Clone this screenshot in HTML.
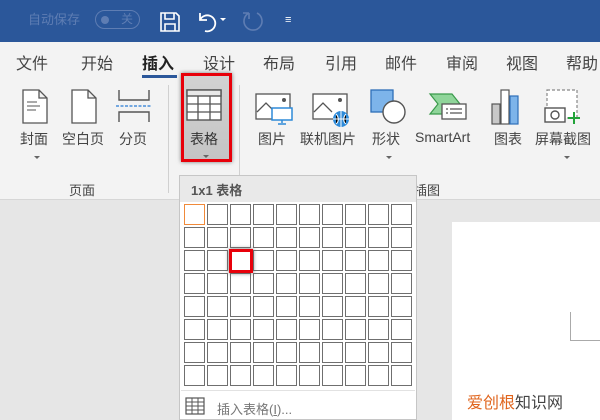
<!DOCTYPE html>
<html><head><meta charset="utf-8"><style>
*{margin:0;padding:0;box-sizing:border-box}
body{width:600px;height:420px;overflow:hidden;position:relative;background:#e6e6e6;font-family:"Liberation Sans","Noto Sans CJK SC",sans-serif;}
.abs{position:absolute}
.title{left:0;top:0;width:600px;height:42px;background:#2b579a}
.tabs{left:0;top:42px;width:600px;height:158px;background:#f3f3f3;border-bottom:1px solid #d6d6d6}
.tab{position:absolute;top:50px;font-size:16px;color:#444;white-space:nowrap}
.lbl{position:absolute;top:129px;font-size:14px;color:#444;white-space:nowrap}
.arr{position:absolute;top:156px;width:0;height:0;border-left:3px solid transparent;border-right:3px solid transparent;border-top:3px solid #666}
.sep{position:absolute;top:85px;width:1px;height:108px;background:#d0d0d0}
.cell{position:absolute;width:21px;height:21px;border:1px solid #6f6f6f;background:#fff}
</style></head><body>
<div class="abs title"></div>
<div class="abs" style="left:28px;top:9px;font-size:13px;color:#5e7db3">自动保存</div>
<div class="abs" style="left:95px;top:10px;width:45px;height:19px;border:1px solid #5e7db3;border-radius:10px"></div>
<div class="abs" style="left:101px;top:16px;width:8px;height:8px;border-radius:4px;background:#5e7db3"></div>
<div class="abs" style="left:121px;top:10px;font-size:12px;color:#5e7db3">关</div>
<svg class="abs" style="left:158px;top:10px" width="24" height="24" viewBox="0 0 24 24"><path d="M3 3h15l3 3v15H3z M7 3v6h9V3 M7 21v-7h10v7" fill="none" stroke="#fff" stroke-width="1.6"/></svg>
<svg class="abs" style="left:196px;top:10px" width="34" height="24" viewBox="0 0 34 24"><path d="M4 3v7h7 M4 10a8 8 0 1 1 5 11" fill="none" stroke="#fff" stroke-width="1.8"/><path d="M24 8l3 3 3-3z" fill="#fff"/></svg>
<svg class="abs" style="left:240px;top:8px" width="26" height="26" viewBox="0 0 26 26"><path d="M9 5a9 9 0 1 0 8 0 M9 5h-6 M9 5v6" fill="none" stroke="#5e7db3" stroke-width="1.6"/></svg>
<div class="abs" style="left:285px;top:14px;font-size:11px;color:#fff">≡</div>

<div class="abs tabs"></div>
<div class="tab" style="left:16px">文件</div>
<div class="tab" style="left:81px">开始</div>
<div class="tab" style="left:142px;font-weight:bold;color:#222">插入</div>
<div class="abs" style="left:142px;top:75px;width:35px;height:3px;background:#2b579a"></div>
<div class="tab" style="left:203px">设计</div>
<div class="tab" style="left:263px">布局</div>
<div class="tab" style="left:325px">引用</div>
<div class="tab" style="left:385px">邮件</div>
<div class="tab" style="left:446px">审阅</div>
<div class="tab" style="left:506px">视图</div>
<div class="tab" style="left:566px">帮助</div>

<svg class="abs" style="left:20px;top:88px" width="30" height="38" viewBox="0 0 30 38"><path d="M3 2h16l8 8v25H3z M19 2v8h8" fill="#fff" stroke="#555" stroke-width="1.3"/><path d="M7 14h10M7 18h13M7 22h9" stroke="#777" stroke-width="1.3"/></svg>
<svg class="abs" style="left:69px;top:88px" width="30" height="38" viewBox="0 0 30 38"><path d="M3 2h16l8 8v25H3z M19 2v8h8" fill="#fff" stroke="#555" stroke-width="1.3"/></svg>
<svg class="abs" style="left:115px;top:88px" width="38" height="36" viewBox="0 0 38 36"><path d="M4 2v10h30V2 M4 34V24h30v10" fill="none" stroke="#555" stroke-width="1.4"/><path d="M1 18h36" stroke="#4a90d9" stroke-width="1.4" stroke-dasharray="3 1.5"/></svg>
<div class="lbl" style="left:20px">封面</div>
<div class="lbl" style="left:62px">空白页</div>
<div class="lbl" style="left:119px">分页</div>
<div class="arr" style="left:34px"></div>
<div class="abs" style="left:69px;top:180px;font-size:13px;color:#444">页面</div>
<div class="sep" style="left:168px"></div>
<div class="sep" style="left:239px"></div>

<div class="abs" style="left:181px;top:73px;width:51px;height:89px;border:3px solid #e8000a;background:linear-gradient(#d2d2d2,#c4c4c4);box-shadow:0 0 4px #777"></div>
<svg class="abs" style="left:186px;top:89px" width="38" height="34" viewBox="0 0 38 34"><rect x="1" y="1" width="34" height="30" fill="#fff" stroke="#555" stroke-width="1.4"/><rect x="1" y="1" width="34" height="6" fill="#e8e8e8" stroke="#555" stroke-width="1.4"/><path d="M1 15h34M1 23h34M12 7v24M24 7v24" stroke="#555" stroke-width="1.3"/></svg>
<div class="lbl" style="left:190px;color:#333">表格</div>
<div class="arr" style="left:203px;top:155px"></div>

<svg class="abs" style="left:254px;top:92px" width="40" height="36" viewBox="0 0 40 36"><rect x="2" y="2" width="34" height="25" fill="#fff" stroke="#555" stroke-width="1.3"/><path d="M3 20l9-9 9 9" fill="none" stroke="#555" stroke-width="1.3"/><circle cx="30" cy="8" r="2" fill="#555"/><rect x="18" y="16" width="20" height="12" fill="#fff" stroke="#2e8ad8" stroke-width="1.5"/><path d="M28 28v3M24 32h8" stroke="#2e8ad8" stroke-width="1.5"/></svg>
<svg class="abs" style="left:311px;top:92px" width="40" height="36" viewBox="0 0 40 36"><rect x="2" y="2" width="34" height="25" fill="#fff" stroke="#555" stroke-width="1.3"/><path d="M3 20l9-9 9 9" fill="none" stroke="#555" stroke-width="1.3"/><circle cx="29" cy="8" r="2" fill="#555"/><circle cx="30" cy="27" r="8" fill="#2e8ad8"/><path d="M22 27h16M30 19v16M25 22c3 3 3 8 0 10M35 22c-3 3-3 8 0 10" stroke="#fff" stroke-width="1"/></svg>
<svg class="abs" style="left:369px;top:88px" width="40" height="40" viewBox="0 0 40 40"><rect x="2" y="2" width="22" height="22" fill="#7db4ea" stroke="#2e6fb8" stroke-width="1.3"/><circle cx="25" cy="24" r="11" fill="#fff" stroke="#555" stroke-width="1.4"/></svg>
<svg class="abs" style="left:428px;top:92px" width="40" height="32" viewBox="0 0 40 32"><path d="M2 2h22l8 10-8 10H2l8-10z" fill="#8fd59a" stroke="#3a9a4b" stroke-width="1.2"/><rect x="14" y="12" width="24" height="15" fill="#fff" stroke="#555" stroke-width="1.3"/><path d="M18 17h2M22 17h12M18 21h2M22 21h12" stroke="#555" stroke-width="1.2"/></svg>
<svg class="abs" style="left:490px;top:88px" width="36" height="38" viewBox="0 0 36 38"><rect x="2" y="16" width="8" height="20" fill="#c8c8c8" stroke="#555" stroke-width="1.2"/><rect x="11" y="2" width="8" height="34" fill="#fff" stroke="#555" stroke-width="1.2"/><rect x="20" y="8" width="8" height="28" fill="#7db4ea" stroke="#2e6fb8" stroke-width="1.2"/></svg>
<svg class="abs" style="left:544px;top:88px" width="44" height="40" viewBox="0 0 44 40"><rect x="3" y="2" width="30" height="28" fill="#fff" stroke="#888" stroke-width="1.2" stroke-dasharray="3 2"/><rect x="1" y="20" width="20" height="14" fill="#fff" stroke="#555" stroke-width="1.4"/><circle cx="11" cy="27" r="4" fill="none" stroke="#555" stroke-width="1.4"/><path d="M30 24v12M24 30h12" stroke="#22a33a" stroke-width="2"/></svg>
<div class="lbl" style="left:258px">图片</div>
<div class="lbl" style="left:300px">联机图片</div>
<div class="lbl" style="left:372px">形状</div>
<div class="lbl" style="left:415px">SmartArt</div>
<div class="lbl" style="left:494px">图表</div>
<div class="lbl" style="left:535px">屏幕截图</div>
<div class="arr" style="left:386px"></div>
<div class="arr" style="left:564px"></div>
<div class="abs" style="left:414px;top:180px;font-size:13px;color:#444">插图</div>

<div class="abs" style="left:452px;top:222px;width:148px;height:198px;background:#fff"></div>
<div class="abs" style="left:570px;top:312px;width:1px;height:28px;background:#aaa"></div>
<div class="abs" style="left:570px;top:340px;width:30px;height:1px;background:#aaa"></div>
<div class="abs" style="left:467px;top:389px;font-size:16px;color:#444"><span style="color:#e0651e">爱创根</span>知识网</div>

<div class="abs" style="left:179px;top:175px;width:238px;height:245px;background:#fff;border:1px solid #c6c6c6"></div>
<div class="abs" style="left:180px;top:176px;width:236px;height:26px;background:#e9e9e9"></div>
<div class="abs" style="left:191px;top:180px;font-size:13px;font-weight:bold;color:#555">1x1 表格</div>
<div id="g"></div>
<div class="abs" style="left:181px;top:390px;width:234px;height:1px;background:#e2e2e2"></div>
<svg class="abs" style="left:185px;top:397px" width="20" height="18" viewBox="0 0 20 18"><rect x="1" y="1" width="18" height="16" fill="#fff" stroke="#555" stroke-width="1.2"/><path d="M1 5h18M1 9h18M1 13h18M7 1v16M13 1v16" stroke="#555" stroke-width="1"/></svg>
<div class="abs" style="left:217px;top:399px;font-size:13px;color:#777">插入表格(<u>I</u>)...</div>
<script>
var h='';for(var r=0;r<8;r++)for(var c=0;c<10;c++){var s='left:'+(184+c*23)+'px;top:'+(204+r*23)+'px';if(r==0&&c==0)s+=';border-color:#f08a3a';h+='<div class="cell" style="'+s+'"></div>';}
h+='<div class="abs" style="left:229px;top:249px;width:24px;height:24px;border:3px solid #e8000a;box-shadow:0 0 4px #666;background:#fff"></div>';
document.getElementById('g').innerHTML=h;
</script>
</body></html>
